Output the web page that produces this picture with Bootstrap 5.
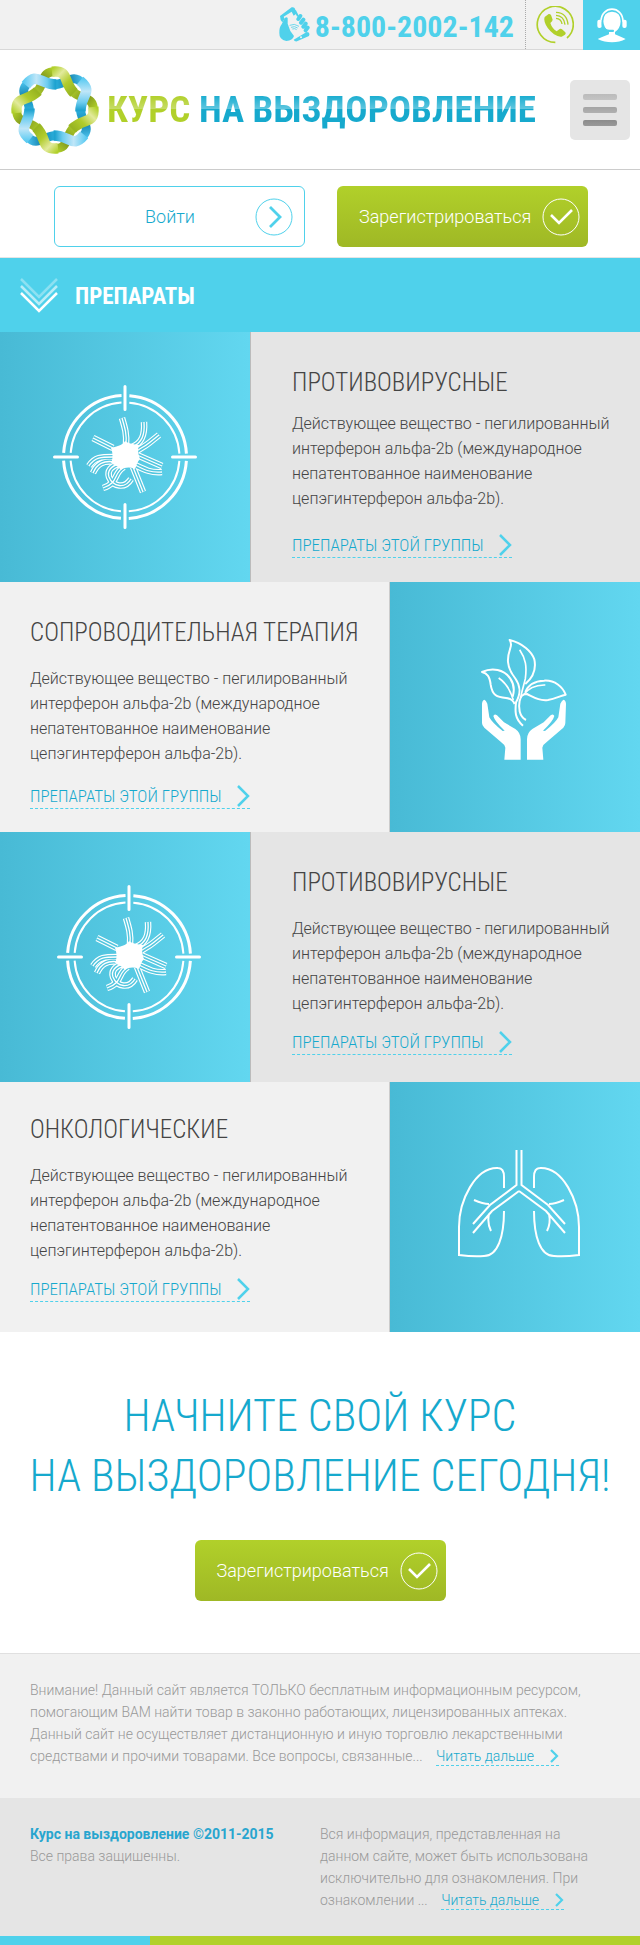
<!DOCTYPE html>
<html lang="ru">
<head>
<meta charset="utf-8">
<meta name="viewport" content="width=device-width, initial-scale=1">
<title>Курс на выздоровление</title>
<link href="https://cdn.jsdelivr.net/npm/bootstrap@5.3.0/dist/css/bootstrap.min.css" rel="stylesheet">
<style>
:root{--cyan:#4fd1eb;--deep:#16a9cd;--lime:#b1d02a;--narrow:"Roboto Condensed","Liberation Sans Narrow",Roboto,sans-serif}
body{font-family:Roboto,"Open Sans",sans-serif;font-weight:300;font-size:16px;line-height:25px;color:#444;background:#fff}
a{color:var(--deep);text-decoration:none}
svg{display:block;flex:none}
.topbar{background:#f1f1f1;height:50px;border-bottom:1px solid #d8d8d8}
.phone{font:700 30px/44px var(--narrow);color:var(--cyan);gap:5px;padding-right:11px}
.phone span{padding-top:5px}
.call{width:58px;border-left:1px dotted #aaa}
.operator{width:57px;height:50px;background:var(--cyan)}
.masthead{height:120px;border-bottom:1px solid #ccc;padding:0 10px;gap:7px}
.brand{font:700 37px/44px var(--narrow);white-space:nowrap}
.brand span{background:linear-gradient(#1aadd0 0 18%,#5ec6df 48%,#16a9cd 50%);-webkit-background-clip:text;background-clip:text;color:transparent}
.brand .lime{background-image:linear-gradient(#b1d02a 0 18%,#c6dc66 48%,#b1d02a 50%)}
.burger{width:60px;height:60px;background:#e5e5e5;border:0;border-radius:5px;gap:7px}
.burger i{width:34px;height:6px;border-radius:2px;background:linear-gradient(#bbb,#c4c4c4)}
.burger i:nth-child(2){background:linear-gradient(#a4a4a4,#b0b0b0)}
.burger i:nth-child(3){background:linear-gradient(#8c8c8c,#999)}
.actions{min-height:88px;gap:32px;padding:16px 52px 10px 54px;border-bottom:1px solid #e5e5e5}
.pill{width:251px;height:61px;border-radius:6px;font-size:18px;font-weight:300;line-height:24px;padding:0 11px 0 22px}
.pill-out,.pill-out:hover{border:1px solid var(--cyan);color:var(--deep);background:#fff}
.pill-lime,.pill-lime:hover{border:0;color:#fff;background:linear-gradient(#b1d02a,#9fb825);padding-right:8px}
.strip{height:74px;background:var(--cyan);padding-left:20px;gap:17px}
.strip h1{font:700 23px/32px var(--narrow);color:#fff;margin:0;padding-top:3px}
.group{min-height:250px;background:#e5e5e5}
.group-light{background:#f1f1f1}
.art{flex:0 0 251px;background:linear-gradient(90deg,#48bad5,#62d7f0);border-right:1px solid #bbb;background-clip:padding-box}
.group-light .art{border-right:0;border-left:1px solid #ccc}
.info{padding:35px 24px 20px 41px}
.group-light .info{padding-left:30px;padding-right:20px}
.info h2{font:300 25px/32px var(--narrow);margin:0 0 17px;color:#444}
.info p{margin:0 0 18px}
.info.first h2{margin-bottom:12px}
.info.first p{margin-bottom:22px}
.info.tight p{margin-bottom:14px}
.group-light .tight{padding-top:32px}
.more{font:300 17px/24px var(--narrow);display:inline-flex;align-items:center;gap:15px;border-bottom:1px dashed var(--cyan)}
.cta{padding:54px 0 52px;text-align:center;border-bottom:1px solid #e0e0e0}
.cta h2{font:300 44px/60px var(--narrow);color:var(--deep);margin:0 0 34px}
.foot{font-size:14px;line-height:22px;color:#999;padding:25px 30px 0}
.notice{background:#f1f1f1;min-height:144px}
.legal{background:#e5e5e5;min-height:138px}
.legal b{color:#28a5cf;font-weight:700}
.read{margin-left:10px;display:inline-flex;align-items:center;gap:16px;line-height:18px;border-bottom:1px dashed var(--cyan)}
.stripe{height:9px;background:linear-gradient(90deg,var(--cyan) 150px,var(--lime) 150px)}
</style>
</head>
<body>
<svg width="0" height="0" class="position-absolute" aria-hidden="true">
<defs>
<linearGradient id="gl" gradientUnits="userSpaceOnUse" x1="-4" y1="-40" x2="18" y2="-18"><stop offset="0" stop-color="#b1d02a"/><stop offset=".3" stop-color="#e2ea9c"/><stop offset=".65" stop-color="#b1cc2c"/><stop offset="1" stop-color="#98b522"/></linearGradient>
<linearGradient id="bl" gradientUnits="userSpaceOnUse" x1="-4" y1="-40" x2="18" y2="-18"><stop offset="0" stop-color="#5ccbf2"/><stop offset=".4" stop-color="#bfe6f8"/><stop offset=".75" stop-color="#6fcdf0"/><stop offset="1" stop-color="#1fa3d0"/></linearGradient>
<linearGradient id="gd" gradientUnits="userSpaceOnUse" x1="18" y1="-18" x2="40" y2="0"><stop offset="0" stop-color="#a8c52a"/><stop offset=".5" stop-color="#7f961d"/><stop offset="1" stop-color="#b1d02a"/></linearGradient>
<linearGradient id="bd" gradientUnits="userSpaceOnUse" x1="18" y1="-18" x2="40" y2="0"><stop offset="0" stop-color="#2bb0dd"/><stop offset=".5" stop-color="#1583b0"/><stop offset="1" stop-color="#4cc4ee"/></linearGradient>
<path id="over" d="M-3-38.300C15-40 7-29 19-17" fill="none" stroke-width="10.500"/>
<path id="under" d="M17-19C27-9 38.500-15 38.500 1" fill="none" stroke-width="9"/>
<g id="gu" stroke="url(#gd)"><use href="#under"/><use href="#under" transform="rotate(90)"/><use href="#under" transform="rotate(180)"/><use href="#under" transform="rotate(270)"/></g>
<g id="bu" stroke="url(#bd)"><use href="#under"/><use href="#under" transform="rotate(90)"/><use href="#under" transform="rotate(180)"/><use href="#under" transform="rotate(270)"/></g>
<g id="go" stroke="url(#gl)"><use href="#over"/><use href="#over" transform="rotate(90)"/><use href="#over" transform="rotate(180)"/><use href="#over" transform="rotate(270)"/></g>
<g id="bo" stroke="url(#bl)"><use href="#over"/><use href="#over" transform="rotate(90)"/><use href="#over" transform="rotate(180)"/><use href="#over" transform="rotate(270)"/></g>
<g id="arms" fill="none">
<path d="M-3-39C0-29 2-22 1-12"/><path d="M19-35C20-22 17-14 7-10"/><path d="M34-22L24-14C18-9 14-9 10-4"/><path d="M-32-19L-12-9"/><path d="M-36 9C-30 0-24 0-12 0"/><path d="M-32 16C-28 7-22 3-10 5"/><path d="M-22 31C-6 26-12 16-1 10"/><path d="M6 22C0 32-12 30-16 20C-18 14-14 9-6 7"/><path d="M18 35L8 10"/><path d="M37 9L12-2"/><path d="M37 15C26 16 20 13 10 8"/>
</g>
<symbol id="virus" viewBox="-72 -72 144 144">
<g fill="none" stroke="#fff"><circle r="61.5" stroke-width="3" stroke-dasharray="88.6 8" stroke-dashoffset="-4"/><circle r="54.5" stroke-width="2" stroke-dasharray="77.6 8" stroke-dashoffset="-4"/><path stroke-width="3" stroke-linecap="round" d="M0-70.500V-47.500M0 70.500V47.500M-70.500 0H-47.500M70.500 0H47.500"/></g>
<use href="#arms" stroke="#fff" stroke-width="6.500"/><use href="#arms" stroke="#52c6df" stroke-width="4.200"/><use href="#arms" stroke="#fff" stroke-width="1.300"/>
<path fill="#fff" d="M-14-9C-6-11-1-13 0-16C4-13 8-13 14-12C12-6 14-1 15 2C12 5 12 8 10 12C5 10 0 10-4 13C-7 9-11 8-14 6C-12 2-12-4-14-9Z"/>
</symbol>
<symbol id="check" viewBox="0 0 38 38"><circle cx="19" cy="19" r="18" fill="none" stroke="currentColor"/><path d="M9 17L17 25L30 12" fill="none" stroke="currentColor" stroke-width="2.600"/></symbol>
<symbol id="chev" viewBox="0 0 13 22"><path d="M1 1L11 11L1 21" fill="none" stroke="#4fd1eb" stroke-width="2.500"/></symbol>
<symbol id="chevsm" viewBox="0 0 9 14"><path d="M1 1L7 7L1 13" fill="none" stroke="#4fd1eb" stroke-width="2.200"/></symbol>
</defs>
</svg>

<div class="topbar d-flex justify-content-end">
<a href="tel:88002002142" class="phone d-flex align-items-center">
<svg width="31" height="35" viewBox="0 0 93 105"><path d="M3 27L38 1Q46-1 48 5L52 20L44 26L38 14L14 29L17 36L10 46L5 39Z" fill="#4fd1eb"/><path d="M17 34Q22 28 26 33L26 50L34 72L45 87Q41 101 22 102Q0 98 1 78Q0 62 8 52Z" fill="#4fd1eb"/><path d="M44 98L83 75Q91 75 91 82L90 87L54 103Q46 104 44 98Z" fill="#4fd1eb"/><g stroke="#4fd1eb" stroke-width="12" stroke-linecap="round"><path d="M58 36L64 27M66 47L73 38M73 59L80 50M80 70L86 62"/></g><path d="M48 10L57 28" stroke="#4fd1eb" stroke-width="6"/><g fill="none" stroke="#4fd1eb" stroke-width="2.500"><path d="M32 55Q46 48 60 58M36 61Q47 56 56 63M40 66Q48 63 53 68"/></g><circle cx="66" cy="91" r="3" fill="#f1f1f1"/></svg>
<span>8-800-2002-142</span></a>
<a href="#call" class="call d-flex align-items-center justify-content-center" aria-label="Заказать звонок">
<svg width="38" height="38" viewBox="0 0 114 114"><path d="M58 109A54 54 0 1 1 93 96" fill="none" stroke="#b1d02a" stroke-width="5"/><path d="M26 33L38 24Q42 23 45 27L50 41Q50 45 43 51Q48 67 62 76L71 69Q75 67 78 70L88 79Q91 83 87 86L77 92Q68 94 54 85Q32 68 26 48Q23 39 26 33Z" fill="#b1d02a"/><path d="M60 19Q93 20 96 56M60 28Q84 29 87 56M60 37Q76 38 78 54" fill="none" stroke="#b1d02a" stroke-width="4"/></svg></a>
<a href="#operator" class="operator d-flex align-items-center justify-content-center" aria-label="Оператор">
<svg width="30" height="35" viewBox="0 0 90 105"><path d="M12 41C12-9 78-9 78 41" fill="none" stroke="#fff" stroke-width="5"/><path d="M19 40Q19 12 45 11Q71 12 71 40Q70 62 54 72V79Q70 86 86 93Q68 103 45 103Q22 103 2 93Q18 86 36 79V72Q20 60 19 40Z" fill="#fff"/><rect x="1" y="35" width="13" height="25" rx="6" fill="#fff"/><rect x="76" y="35" width="13" height="25" rx="6" fill="#fff"/><path d="M16 35V52Q22 67 42 69" fill="none" stroke="#4fd1eb" stroke-width="4"/><rect x="31" y="65" width="20" height="7" rx="3" fill="#4fd1eb"/></svg></a>
</div>

<header class="masthead d-flex align-items-center">
<svg width="90" height="90" viewBox="-45 -45 90 90"><use href="#gu"/><use href="#bu" transform="rotate(45)"/><use href="#go"/><use href="#bo" transform="rotate(45)"/></svg>
<a href="#" class="brand me-auto"><span class="lime">КУРС</span> <span>НА ВЫЗДОРОВЛЕНИЕ</span></a>
<button class="burger d-flex flex-column align-items-center justify-content-center" type="button" aria-label="Меню"><i></i><i></i><i></i></button>
</header>

<div class="actions d-flex flex-wrap">
<button type="button" class="btn pill pill-out d-flex align-items-center"><span class="flex-fill ps-2">Войти</span><svg width="38" height="38" viewBox="0 0 38 38"><circle cx="19" cy="19" r="18" fill="none" stroke="#4fd1eb"/><path d="M15 9L25 19L15 29" fill="none" stroke="#4fd1eb" stroke-width="2.800"/></svg></button>
<button type="button" class="btn pill pill-lime d-flex align-items-center justify-content-between"><span>Зарегистрироваться</span><svg width="38" height="38"><use href="#check"/></svg></button>
</div>

<div class="strip d-flex align-items-center">
<svg width="38" height="35" viewBox="0 0 38 35" fill="none" stroke="#fff" stroke-width="2.500"><path d="M1 1L19 19L37 1" opacity=".35"/><path d="M1 8L19 26L37 8" opacity=".6"/><path d="M1 15L19 33L37 15"/></svg>
<h1>ПРЕПАРАТЫ</h1>
</div>

<main>
<section class="group d-flex">
<div class="art d-flex align-items-center justify-content-center"><svg width="144" height="144"><use href="#virus"/></svg></div>
<div class="info first"><h2>ПРОТИВОВИРУСНЫЕ</h2><p>Действующее вещество - пегилированный интерферон альфа-2b (международное непатентованное наименование цепэгинтерферон альфа-2b).</p><a href="#" class="more">ПРЕПАРАТЫ ЭТОЙ ГРУППЫ <svg width="13" height="22"><use href="#chev"/></svg></a></div>
</section>
<section class="group group-light d-flex">
<div class="info flex-fill"><h2>СОПРОВОДИТЕЛЬНАЯ ТЕРАПИЯ</h2><p>Действующее вещество - пегилированный интерферон альфа-2b (международное непатентованное наименование цепэгинтерферон альфа-2b).</p><a href="#" class="more">ПРЕПАРАТЫ ЭТОЙ ГРУППЫ <svg width="13" height="22"><use href="#chev"/></svg></a></div>
<div class="art d-flex align-items-center justify-content-center ps-3 pb-3">
<svg width="87" height="124" viewBox="300 175 261 372"><g fill="none" stroke="#fff" stroke-width="6" stroke-linejoin="round"><path d="M429 441C404 420 405 398 408 371C425 340 420 320 407 301C376 262 382 235 391 208C396 195 392 190 389 184C428 194 455 218 463 242C470 275 458 297 436 316"/><path d="M404 376C398 362 390 359 378 358C350 356 337 350 332 318C329 292 321 284 306 280C337 266 372 272 391 300C403 318 403 338 398 354"/><path d="M438 424C417 413 415 386 419 366C423 350 429 346 441 346C462 356 478 367 504 364C526 360 540 352 557 348C548 325 525 304 492 306C464 307 444 320 436 340"/><path d="M419 213C437 240 441 262 436 300C431 322 424 342 422 358M356 298C382 315 392 337 400 364M496 319C465 318 445 328 429 350" stroke-width="5"/></g><path fill="#fff" d="M313 363Q318 364 322 375L328 416Q336 432 368 457L374 456Q344 428 340 412Q343 404 351 410L372 431L406 451Q422 462 422 482V543H373L376 507Q374 497 362 489L313 447Q306 441 306 433V375Q307 364 313 363Z"/><path fill="#fff" d="M551 363Q546 364 541 375L535 416Q527 432 495 457L489 456Q519 428 523 412Q520 404 512 410L491 431L457 451Q441 462 441 482V543H490L487 507Q489 497 501 489L550 447Q556 441 556 433L558 375Q557 364 551 363Z"/></svg></div>
</section>
<section class="group d-flex">
<div class="art d-flex align-items-center justify-content-center ps-2"><svg width="144" height="144"><use href="#virus"/></svg></div>
<div class="info tight"><h2>ПРОТИВОВИРУСНЫЕ</h2><p>Действующее вещество - пегилированный интерферон альфа-2b (международное непатентованное наименование цепэгинтерферон альфа-2b).</p><a href="#" class="more">ПРЕПАРАТЫ ЭТОЙ ГРУППЫ <svg width="13" height="22"><use href="#chev"/></svg></a></div>
</section>
<section class="group group-light d-flex">
<div class="info tight flex-fill"><h2>ОНКОЛОГИЧЕСКИЕ</h2><p>Действующее вещество - пегилированный интерферон альфа-2b (международное непатентованное наименование цепэгинтерферон альфа-2b).</p><a href="#" class="more">ПРЕПАРАТЫ ЭТОЙ ГРУППЫ <svg width="13" height="22"><use href="#chev"/></svg></a></div>
<div class="art d-flex align-items-center justify-content-center ps-2 pb-2">
<svg width="124" height="112" viewBox="457 1146 124 112" fill="none" stroke="#fff" stroke-width="2"><g id="lung"><path d="M504 1187V1176Q504 1167 498 1167C475 1166 459 1200 459 1226V1254Q474 1256 484 1255C498 1255 504 1235 504 1210"/><path d="M516.500 1149V1184L490 1204L473 1223M519 1190L492 1210L473 1232M474 1199Q483 1203 489 1203M489 1213Q487 1222 491 1230"/></g><use href="#lung" transform="matrix(-1 0 0 1 1038 0)"/></svg></div>
</section>

<section class="cta">
<h2>НАЧНИТЕ СВОЙ КУРС<br>НА ВЫЗДОРОВЛЕНИЕ СЕГОДНЯ!</h2>
<button type="button" class="btn pill pill-lime d-inline-flex align-items-center justify-content-between"><span>Зарегистрироваться</span><svg width="38" height="38"><use href="#check"/></svg></button>
</section>
</main>

<footer>
<div class="foot notice">Внимание! Данный сайт является ТОЛЬКО бесплатным информационным ресурсом, помогающим ВАМ найти товар в законно работающих, лицензированных аптеках. Данный сайт не осуществляет дистанционную и иную торговлю лекарственными средствами и прочими товарами. Все вопросы, связанные... <a href="#" class="read">Читать дальше <svg width="9" height="14"><use href="#chevsm"/></svg></a></div>
<div class="foot legal"><div class="row g-0"><div class="col-6"><b>Курс на выздоровление ©2011-2015</b><br>Все права защишенны.</div><div class="col-6">Вся информация, представленная на данном сайте, может быть использована исключительно для ознакомления. При ознакомлении ... <a href="#" class="read">Читать дальше <svg width="9" height="14"><use href="#chevsm"/></svg></a></div></div></div>
<div class="stripe"></div>
</footer>
<script src="https://cdn.jsdelivr.net/npm/bootstrap@5.3.0/dist/js/bootstrap.bundle.min.js"></script>
</body>
</html>
